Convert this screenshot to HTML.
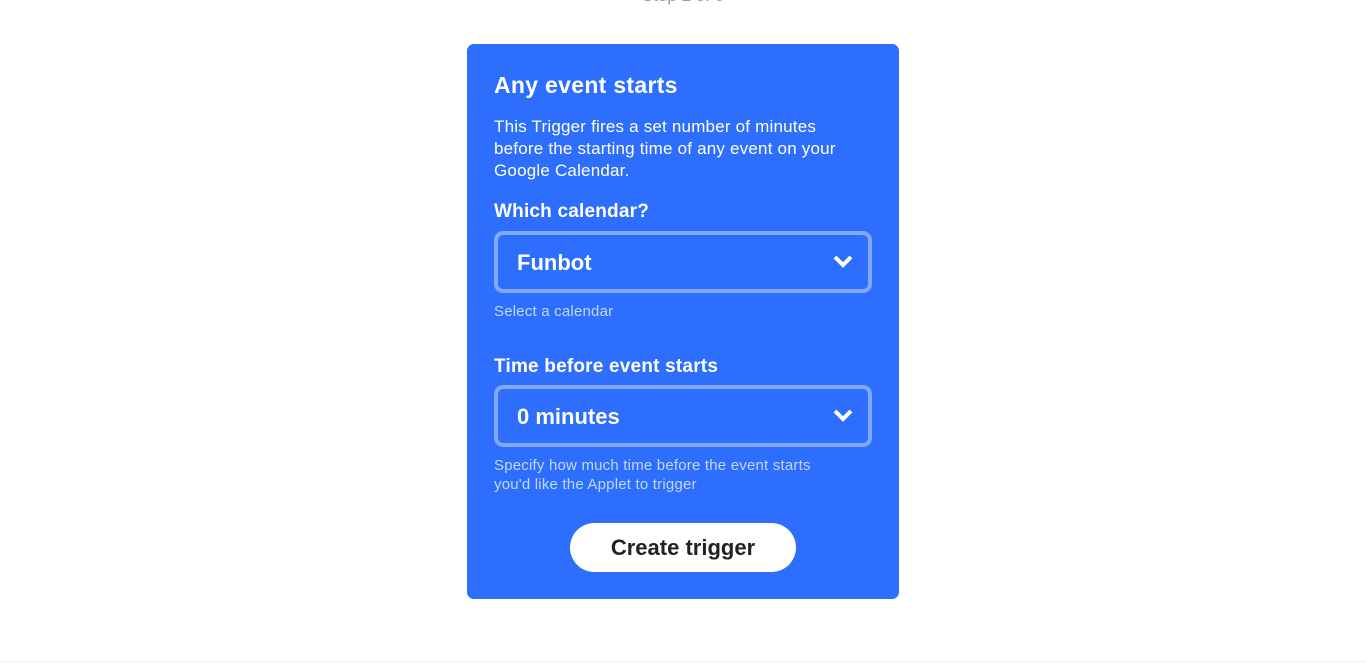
<!DOCTYPE html>
<html><head><style>
*{margin:0;padding:0;box-sizing:border-box}
body{width:1366px;height:665px;background:#fff;font-family:"Liberation Sans",sans-serif;position:relative;overflow:hidden}
.step{position:absolute;top:-14px;left:0;width:1366px;text-align:center;color:#999;font-size:17px}
.card{position:absolute;left:467px;top:44px;width:432px;height:555px;background:#2d6ffc;border-radius:7px;color:#fff}
.abs{position:absolute;left:27px}
h1{font-size:23px;font-weight:bold;line-height:26px;letter-spacing:0.3px}
.desc{top:72px;font-size:17px;line-height:22px;width:372px;letter-spacing:0.2px}
.lab{font-size:19px;font-weight:bold;line-height:24px;letter-spacing:0.2px}
.sel{position:absolute;left:27px;width:378px;height:62px;border:4px solid rgba(255,255,255,0.4);border-radius:9px;font-size:22px;font-weight:bold;padding-left:19px;line-height:56px}
.sel svg{position:absolute;right:14px;top:18px}
.help{font-size:15px;line-height:19px;color:#c5d6ff;letter-spacing:0.2px}
.btn{position:absolute;left:103px;top:479px;width:226px;height:49px;border-radius:25px;background:#fff;color:#222;font-size:22px;font-weight:bold;text-align:center;line-height:49px}
.line{position:absolute;left:0;top:661px;width:1366px;height:1px;background:#eee}
</style></head><body>
<div class="step">Step 2 of 6</div>
<div class="card">
<h1 class="abs" style="top:28px">Any event starts</h1>
<div class="abs desc">This Trigger fires a set number of minutes before the starting time of any event on your Google Calendar.</div>
<div class="abs lab" style="top:156px">Which calendar?</div>
<div class="sel" style="top:187px">Funbot<svg width="22" height="16" viewBox="0 0 22 16"><path d="M3 4l8 8 8-8" stroke="#fff" stroke-width="4" fill="none"/></svg></div>
<div class="abs help" style="top:258px">Select a calendar</div>
<div class="abs lab" style="top:311px">Time before event starts</div>
<div class="sel" style="top:341px">0 minutes<svg width="22" height="16" viewBox="0 0 22 16"><path d="M3 4l8 8 8-8" stroke="#fff" stroke-width="4" fill="none"/></svg></div>
<div class="abs help" style="top:412px">Specify how much time before the event starts<br>you'd like the Applet to trigger</div>
<div class="btn">Create trigger</div>
</div>
<div class="line"></div>
</body></html>
